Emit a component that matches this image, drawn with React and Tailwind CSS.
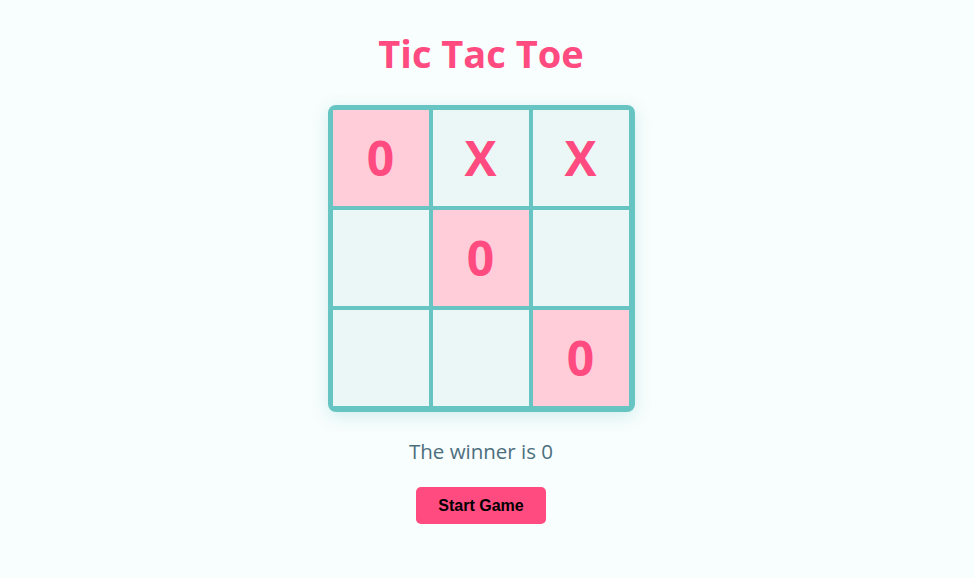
import React from "react";

const board = ["0", "X", "X", "", "0", "", "", "", "0"];
const winLine = [0, 4, 8];

const Cell = ({ value, index }) => {
  const won = winLine.includes(index);
  return (
    <div
      className={
        "w-[96px] h-[96px] flex justify-center items-center text-[48px] font-bold text-[#ff4b80] " +
        (won ? "bg-[#ffccda]" : "bg-[#eaf7f6]")
      }
    >
      {value}
    </div>
  );
};

const App = () => {
  return (
    <div className="min-h-[578px] w-full pr-[12px] bg-[#f8fdfd] flex flex-col items-center font-['Open_Sans',sans-serif]">
      <h1 className="mt-[27px] text-[38px] leading-[52px] font-bold text-[#ff4b80]">
        Tic Tac Toe
      </h1>
      <div className="mt-[26px] pt-[5px] pl-[5px] pr-[6px] pb-[6px] bg-[#66c4c2] rounded-[8px] grid grid-cols-3 gap-[4px] shadow-[0_4px_16px_rgba(102,196,194,0.25)]">
        {board.map((value, i) => (
          <Cell key={i} value={value} index={i} />
        ))}
      </div>
      <p className="mt-[25px] text-[20.5px] leading-[28px] text-[#4c6f7d]">
        The winner is 0
      </p>
      <button className="mt-[22px] w-[130px] h-[37px] rounded-[5px] bg-[#ff4b80] text-black text-[16px] font-bold font-['Liberation_Sans',sans-serif]">
        Start Game
      </button>
    </div>
  );
};

export default App;
